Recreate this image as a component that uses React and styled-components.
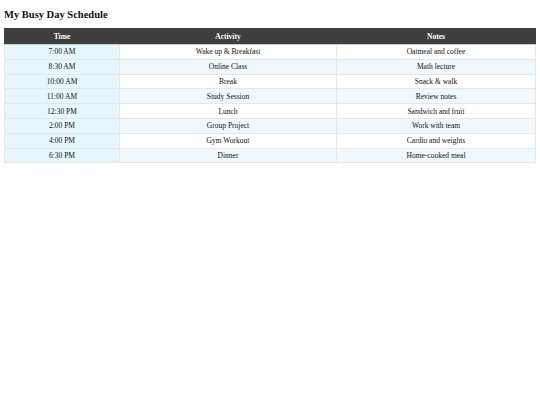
import React from 'react';
import styled, { createGlobalStyle } from 'styled-components';

const GlobalStyle = createGlobalStyle`
  body {
    margin: 4px;
    font-family: "Liberation Serif", "Times New Roman", serif;
    background: #fff;
    color: #111;
  }
`;

const Title = styled.h1`
  font-size: 10.5px;
  font-weight: bold;
  margin: 5px 0 8px 0;
`;

const Table = styled.table`
  width: 100%;
  table-layout: fixed;
  border-collapse: collapse;
  font-size: 7.5px;
`;

const HeadCell = styled.th`
  background-color: #3f3f3f;
  color: #fff;
  font-weight: bold;
  height: 15px;
  padding: 0 4px;
  border: 1px solid #3f3f3f;
  border-bottom-color: #ccc;
  width: ${(p) => p.$width || 'auto'};
`;

const Row = styled.tr`
  background-color: ${(p) => (p.$alt ? '#f0f8ff' : '#fff')};
`;

const Cell = styled.td`
  text-align: center;
  height: 13.8px;
  padding: 0 4px;
  border: 1px solid #e6e6e6;
  background-color: ${(p) => (p.$time ? '#e6f6ff' : 'transparent')};
`;

const schedule = [
  ['7:00 AM', 'Wake up & Breakfast', 'Oatmeal and coffee'],
  ['8:30 AM', 'Online Class', 'Math lecture'],
  ['10:00 AM', 'Break', 'Snack & walk'],
  ['11:00 AM', 'Study Session', 'Review notes'],
  ['12:30 PM', 'Lunch', 'Sandwich and fruit'],
  ['2:00 PM', 'Group Project', 'Work with team'],
  ['4:00 PM', 'Gym Workout', 'Cardio and weights'],
  ['6:30 PM', 'Dinner', 'Home-cooked meal'],
];

const App = () => {
  return (
    <>
      <GlobalStyle />
      <Title>My Busy Day Schedule</Title>
      <Table>
        <thead>
          <tr>
            <HeadCell $width="106px">Time</HeadCell>
            <HeadCell $width="208px">Activity</HeadCell>
            <HeadCell>Notes</HeadCell>
          </tr>
        </thead>
        <tbody>
          {schedule.map(([time, activity, notes], i) => (
            <Row key={time} $alt={i % 2 === 1}>
              <Cell $time>{time}</Cell>
              <Cell>{activity}</Cell>
              <Cell>{notes}</Cell>
            </Row>
          ))}
        </tbody>
      </Table>
    </>
  );
};

export default App;
